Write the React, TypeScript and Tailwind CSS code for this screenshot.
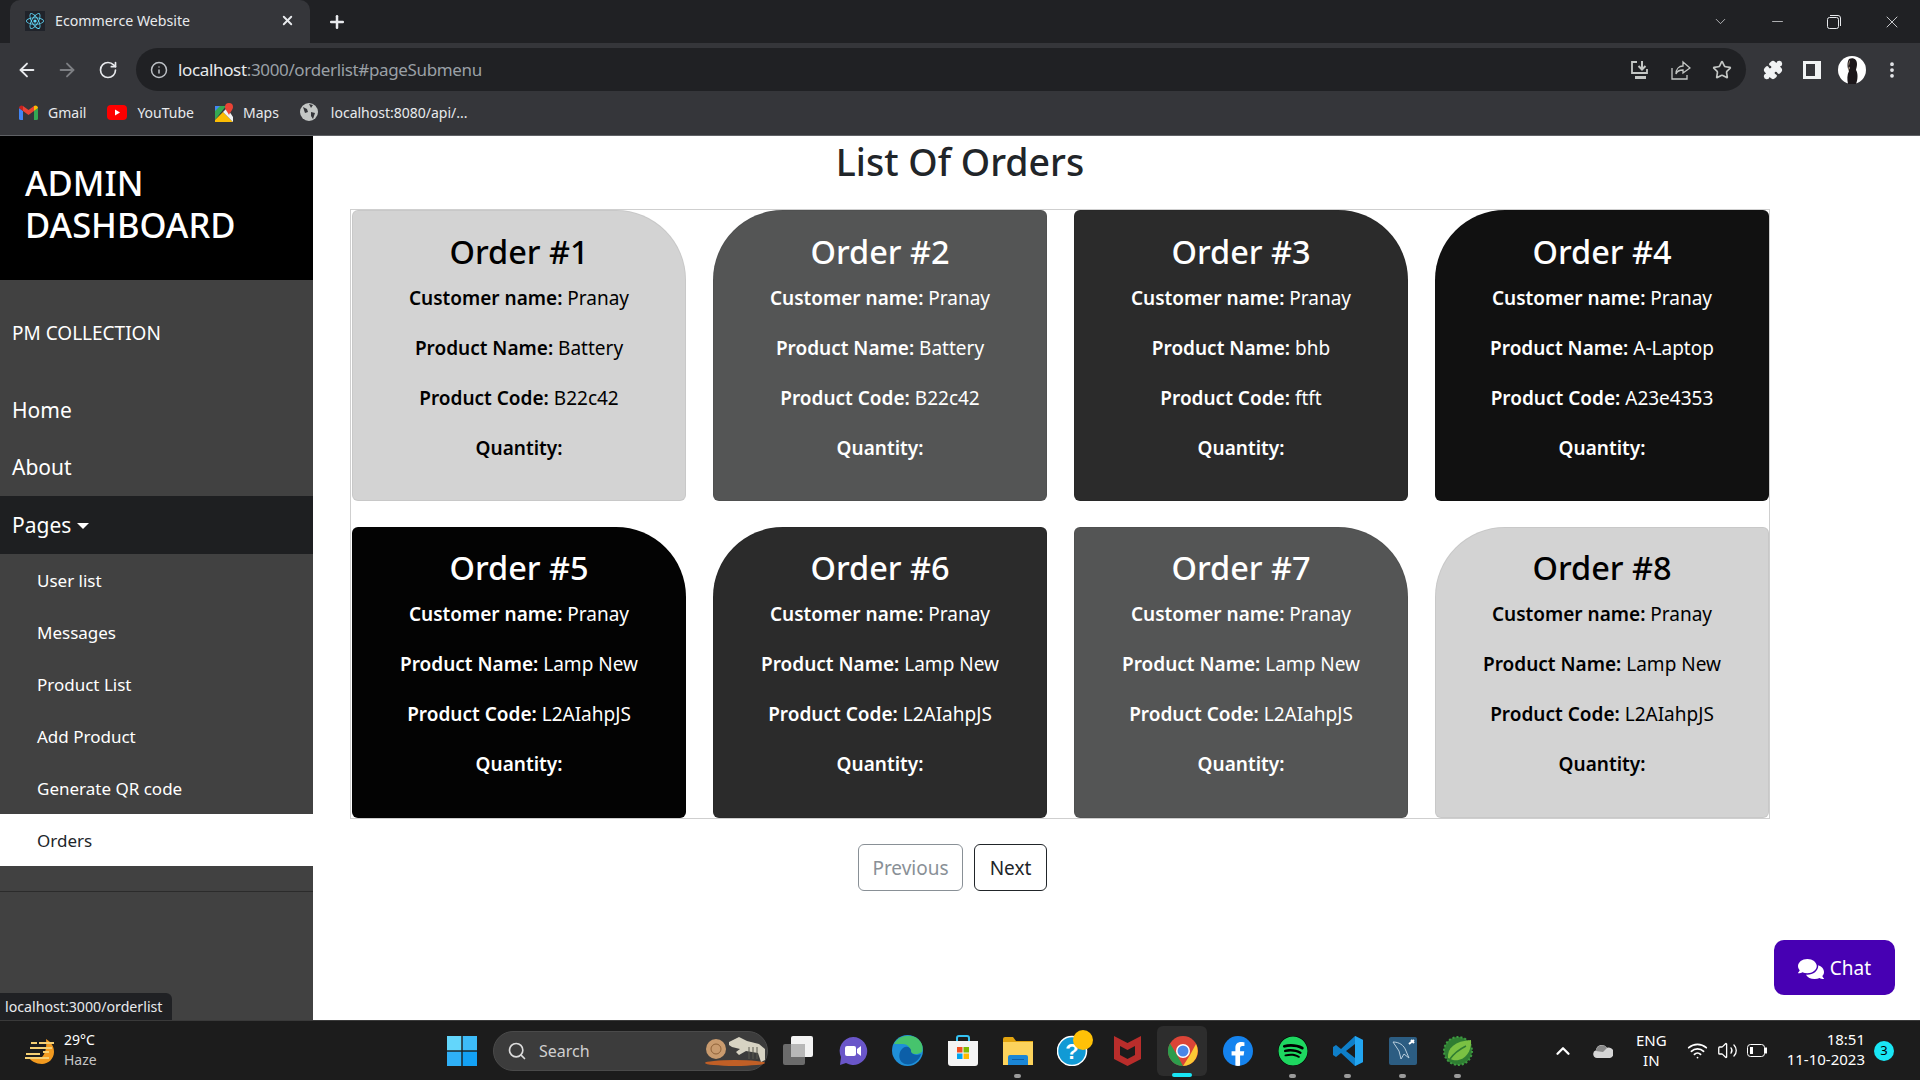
import { ArrowLeft, ArrowRight, RotateCw, Info, Plus, X, Star, Puzzle, ChevronDown, ChevronUp, Minus, Search, Wifi, Volume2, MoreVertical } from "lucide-react";
import { FaReact, FaComments, FaFacebookF, FaSpotify } from "react-icons/fa";

const orders = [
  { id: 1, name: "Battery", code: "B22c42", card: "bg-[#d3d3d3] text-black rounded-tr-[70px]" },
  { id: 2, name: "Battery", code: "B22c42", card: "bg-[#545555] text-white rounded-tl-[70px]" },
  { id: 3, name: "bhb", code: "ftft", card: "bg-[#2b2b2b] text-white rounded-tr-[70px]" },
  { id: 4, name: "A-Laptop", code: "A23e4353", card: "bg-[#111111] text-white rounded-tl-[70px]" },
  { id: 5, name: "Lamp New", code: "L2AIahpJS", card: "bg-[#030303] text-white rounded-tr-[70px]" },
  { id: 6, name: "Lamp New", code: "L2AIahpJS", card: "bg-[#2b2b2b] text-white rounded-tl-[70px]" },
  { id: 7, name: "Lamp New", code: "L2AIahpJS", card: "bg-[#545555] text-white rounded-tr-[70px]" },
  { id: 8, name: "Lamp New", code: "L2AIahpJS", card: "bg-[#d3d3d3] text-black rounded-tl-[70px]" },
];

const subLinks = ["User list", "Messages", "Product List", "Add Product", "Generate QR code"];

function OrderCard({ order }: { order: (typeof orders)[number] }) {
  return (
    <div className={`h-[291px] rounded-md border border-black/5 text-center ${order.card}`}>
      <h3 className={`${order.id > 4 ? "mt-[17px]" : "mt-[18px]"} text-[32.5px] font-medium leading-[46px]`}>Order #{order.id}</h3>
      <div className="mt-[8px] flex flex-col gap-[20px] text-[19px] leading-[30px]">
        <p><b className="font-semibold">Customer name:</b> Pranay</p>
        <p><b className="font-semibold">Product Name:</b> {order.name}</p>
        <p><b className="font-semibold">Product Code:</b> {order.code}</p>
        <p><b className="font-semibold">Quantity:</b></p>
      </div>
    </div>
  );
}

function Bookmark({ icon, label }: { icon: React.ReactNode; label: string }) {
  return (
    <div className="flex items-center gap-[10px] text-[14px] text-[#e8eaed]">
      {icon}
      <span>{label}</span>
    </div>
  );
}

function BrowserBar() {
  return (
    <div className="h-[136px] shrink-0 border-b border-[#5f6165] bg-[#35363a] text-[#e8eaed]">
      <div className="flex h-[43px] items-end bg-[#202124] pl-[10px]">
        <div className="flex h-[43px] w-[300px] items-center rounded-t-[10px] bg-[#35363a] pb-[2px] pl-[15px] pr-[15px]">
          <span className="flex h-5 w-5 items-center justify-center bg-[#20232a]">
            <FaReact size={18} className="text-[#61dafb]" />
          </span>
          <span className="ml-[10px] flex-1 text-[14.200px]">Ecommerce Website</span>
          <X size={15} strokeWidth={3} />
        </div>
        <div className="flex h-[43px] items-center pl-[17px]">
          <Plus size={20} strokeWidth={3} />
        </div>
        <div className="ml-auto flex h-[43px] items-center">
          <ChevronDown size={17} strokeWidth={1} className="mr-[40px]" />
          <Minus size={17} strokeWidth={1} className="mr-[41px]" />
          <svg width="14" height="14" viewBox="0 0 14 14" fill="none" stroke="currentColor" className="mr-[41px]">
            <rect x="0.5" y="2.5" width="11" height="11" rx="2" />
            <path d="M3 .5h8a2.500 2.500 0 0 1 2.500 2.500v8" />
          </svg>
          <X size={20} strokeWidth={1} className="mr-[18px]" />
        </div>
      </div>

      <div className="flex h-[48px] items-center pt-[5px]">
        <ArrowLeft size={22} className="ml-[16px]" />
        <ArrowRight size={22} className="ml-[18px] text-[#7d7f83]" />
        <RotateCw size={20} className="ml-[20px]" />
        <div className="ml-[18px] flex h-[43px] w-[1610px] items-center rounded-full bg-[#202124] pl-[14px] pr-[14px]">
          <Info size={18} className="text-[#bdc1c6]" />
          <span className="ml-[10px] text-[17px] tracking-[-0.35px]">
            localhost<span className="text-[#9aa0a6]">:3000/orderlist#pageSubmenu</span>
          </span>
          <div className="ml-auto flex items-center gap-[21px] text-[#c4c7c5]">
            <svg width="20" height="20" viewBox="0 0 20 20" fill="none" stroke="currentColor" strokeWidth="1.800">
              <path d="M7 2H2v11h15V9" />
              <path d="M12 1v8M8.500 6l3.500 3.500L15.500 6" strokeWidth="2" />
              <path d="M5 17.500h11" strokeWidth="3" />
            </svg>
            <svg width="20" height="20" viewBox="0 0 20 20" fill="none" stroke="currentColor" strokeWidth="1.300">
              <path d="M1 8v11h15v-4" />
              <path d="M12 2l7 6-7 5v-3c-3 0-6 1-7 4 0-5 3-8 7-8z" />
            </svg>
            <Star size={20} strokeWidth={2} />
          </div>
        </div>
        <Puzzle size={20} fill="#f1f3f4" className="ml-[17px] text-[#f1f3f4]" />
        <svg width="18" height="18" viewBox="0 0 18 18" className="ml-[20px]">
          <path fillRule="evenodd" d="M0 0h18v18H0zM3 3v12h9V3z" fill="#f1f3f4" />
        </svg>
        <svg width="28" height="28" viewBox="0 0 28 28" className="ml-[17px]">
          <circle cx="14" cy="14" r="14" fill="#fff" />
          <path d="M11 3c4-2 8 0 8 5 0 3-1 5-1 6 2 3 2 9 0 14h-8c-1-5-1-9 1-13-2-3-2-9 0-12z" fill="#1c171a" />
          <path d="M12 4c-2 2-2 6 0 8l-2 3z" fill="#c9b39b" />
        </svg>
        <MoreVertical size={20} strokeWidth={2.500} className="ml-[16px]" />
      </div>

      <div className="flex h-[42px] items-center gap-[21px] pl-[19px]">
        <Bookmark
          label="Gmail"
          icon={
            <svg width="19" height="15" viewBox="0 0 19 15">
              <path d="M0 3v10.500A1.500 1.500 0 0 0 1.500 15H4V6z" fill="#4285f4" />
              <path d="M19 3v10.500a1.500 1.500 0 0 1-1.500 1.500H15V6z" fill="#34a853" />
              <path d="M4 6l5.500 4L15 6V1l-5.500 4L4 1z" fill="#ea4335" />
              <path d="M0 3c0-2 2.500-3.500 4-2v5z" fill="#c5221f" />
              <path d="M19 3c0-2-2.500-3.500-4-2v5z" fill="#fbbc04" />
            </svg>
          }
        />
        <Bookmark
          label="YouTube"
          icon={
            <svg width="20" height="15" viewBox="0 0 20 15">
              <rect width="20" height="15" rx="4" fill="#f00" />
              <path d="M8 4.500l5 3-5 3z" fill="#fff" />
            </svg>
          }
        />
        <Bookmark
          label="Maps"
          icon={
            <svg width="18" height="19" viewBox="0 0 18 19">
              <path d="M0 3h11L0 17z" fill="#34a853" />
              <path d="M0 19v-2L8 9l10 10z" fill="#fbbc04" />
              <path d="M8 9l4-4 6 9v5z" fill="#f1f3f4" />
              <path d="M14 0a4 4 0 0 1 4 4c0 3-3 5-4 8-1-3-4-5-4-8a4 4 0 0 1 4-4z" fill="#ea4335" />
              <path d="M0 3h5L0 8z" fill="#4285f4" />
            </svg>
          }
        />
        <Bookmark
          label="localhost:8080/api/..."
          icon={
            <svg width="18" height="18" viewBox="0 0 18 18" className="mr-[3px]">
              <circle cx="9" cy="9" r="9" fill="#c4c7c5" />
              <path d="M3 4l4 2 1 3-3 1zM11 9l4 1-2 6-2-3zM9 1l4 1-2 3z" fill="#35363a" />
            </svg>
          }
        />
      </div>
    </div>
  );
}

function Sidebar() {
  return (
    <aside className="flex w-[313px] shrink-0 flex-col bg-[#414141] text-white">
      <div className="h-[144px] bg-black pl-[25px] pt-[26px] text-[34.500px] font-medium leading-[42px]">
        ADMIN
        <br />
        DASHBOARD
      </div>
      <p className="flex h-[101px] items-center pl-[12px] pt-[6px] text-[19px]">PM COLLECTION</p>
      <div className="flex h-[57px] items-center pl-[12px] pt-[2px] text-[21px]">Home</div>
      <div className="flex h-[58px] items-center pl-[12px] pt-[2px] text-[21px]">About</div>
      <div className="flex h-[58px] items-center bg-[#1e1f21] pl-[12px] pt-[2px] text-[21px]">
        Pages
        <span className="ml-[6px] h-0 w-0 border-x-[6px] border-t-[6px] border-x-transparent border-t-white" />
      </div>
      {subLinks.map((link) => (
        <div key={link} className="flex h-[52px] items-center pl-[37px] pt-[1px] text-[17px]">
          {link}
        </div>
      ))}
      <div className="flex h-[52px] items-center bg-white pl-[37px] pt-[1px] text-[17px] text-[#212529]">Orders</div>
      <div className="mt-[25px] border-t border-[#2b2b2b]" />
    </aside>
  );
}

function TaskIcon({ children, dot, active }: { children: React.ReactNode; dot?: boolean; active?: boolean }) {
  return (
    <div className="relative flex h-[60px] w-[55px] items-center justify-center">
      {active && <div className="absolute left-[2px] top-[5px] h-[50px] w-[50px] rounded-md bg-[#2d2d2d]" />}
      <div className="relative flex">{children}</div>
      {dot && <div className="absolute bottom-[3px] left-[24px] h-[4px] w-[7px] rounded-full bg-[#9b9b9b]" />}
      {active && <div className="absolute bottom-[4px] left-[17px] h-[4px] w-[20px] rounded-full bg-[#19e6f5]" />}
    </div>
  );
}

function Taskbar() {
  return (
    <div className="flex h-[60px] shrink-0 items-center border-t border-[#3a3a3a] bg-[#1c1c1c] text-white">
      <div className="flex w-[447px] items-center pl-[24px]">
        <svg width="32" height="30" viewBox="0 0 32 30">
          <path d="M22 3c5 3 8 7 8 13 0 7-6 12-12 12S7 25 4 21h14c3-3 5-9 4-18z" fill="#f29a1f" />
          <g fill="#f5cf73">
            <rect x="7" y="6" width="6" height="2" />
            <rect x="15" y="6" width="15" height="2" />
            <rect x="6" y="11" width="22" height="2" />
            <rect x="2" y="17" width="14" height="2" />
            <rect x="19" y="15" width="6" height="2" />
            <rect x="1" y="21" width="24" height="2" />
          </g>
        </svg>
        <div className="-mt-[2px] ml-[8px] text-[14px] leading-[20px]">
          <div>29°C</div>
          <div className="text-[#c5c5c5]">Haze</div>
        </div>
      </div>

      <svg width="30" height="30" viewBox="0 0 30 30">
        <rect width="14.300" height="14.300" fill="#63d6fb" />
        <rect x="15.700" width="14.300" height="14.300" fill="#3dbcf9" />
        <rect y="15.700" width="14.300" height="14.300" fill="#2fb0f7" />
        <rect x="15.700" y="15.700" width="14.300" height="14.300" fill="#13a1f5" />
      </svg>

      <div className="ml-[16px] flex h-[40px] w-[275px] items-center rounded-full border border-[#4a4a4a] bg-[#3c3c3c] pl-[13px]">
        <Search size={20} strokeWidth={2} className="text-[#dcdcdc]" />
        <span className="ml-[12px] text-[16px] text-[#d0d0d0]">Search</span>
        <svg width="62" height="32" viewBox="0 0 62 32" className="ml-auto">
          <ellipse cx="30" cy="28" rx="30" ry="3" fill="#c05f26" />
          <circle cx="11" cy="14" r="10" fill="#c99b6e" />
          <circle cx="11" cy="14" r="5" fill="none" stroke="#8f6239" />
          <path d="M24 7l10-5 8 4 12 3 6 5v11l-4 2-3-9-12-2-7 4-3-3 4-3-8-2-3-2z" fill="#d7d3c3" />
          <path d="M44 12v12M48 12v12M52 12v12" stroke="#5a5a50" />
        </svg>
      </div>

      <div className="ml-[2px] flex">
        <TaskIcon>
          <svg width="30" height="30" viewBox="0 0 30 30">
            <rect x="0" y="8" width="22" height="21" rx="2" fill="#6b6b6b" />
            <rect x="8" y="0" width="22" height="21" rx="2" fill="#f3f3f3" />
            <rect x="8" y="8" width="14" height="13" fill="#b8b8b8" />
          </svg>
        </TaskIcon>
        <TaskIcon>
          <svg width="30" height="30" viewBox="0 0 30 30">
            <path d="M15 1a14 14 0 1 1-7 26l-6 2 1-8A14 14 0 0 1 15 1z" fill="#6a56c9" />
            <rect x="7" y="10" width="11" height="10" rx="2" fill="#fff" />
            <path d="M19 13l4-3v10l-4-3z" fill="#fff" />
          </svg>
        </TaskIcon>
        <TaskIcon>
          <svg width="31" height="31" viewBox="0 0 31 31">
            <circle cx="15.500" cy="15.500" r="15.500" fill="#1f8fd8" />
            <path d="M2 9C6 1 15-1 23 2c6 3 9 9 7 15-4 3-12 3-12-2 0-3-3-6-7-6-4 0-7 0-9 0z" fill="#46c46d" />
            <path d="M11 13c4-3 9 0 8 4 3 4 8 3 10 2-2 8-12 13-18 9-5-3-5-11 0-15z" fill="#0c5fa8" />
          </svg>
        </TaskIcon>
        <TaskIcon>
          <svg width="30" height="32" viewBox="0 0 30 32">
            <path d="M9 8V3a2 2 0 0 1 2-2h8a2 2 0 0 1 2 2v5" fill="none" stroke="#35c2f2" strokeWidth="2" />
            <path d="M0 6h30v22a3 3 0 0 1-3 3H3a3 3 0 0 1-3-3z" fill="#f4f4f4" />
            <rect x="9" y="12" width="5.500" height="5.500" fill="#f25022" />
            <rect x="15.500" y="12" width="5.500" height="5.500" fill="#7fba00" />
            <rect x="9" y="18.500" width="5.500" height="5.500" fill="#00a4ef" />
            <rect x="15.500" y="18.500" width="5.500" height="5.500" fill="#ffb900" />
          </svg>
        </TaskIcon>
        <TaskIcon dot>
          <svg width="30" height="28" viewBox="0 0 30 28">
            <path d="M0 2a2 2 0 0 1 2-2h8l3 4h17v24H0z" fill="#e2a40f" />
            <rect y="5" width="30" height="23" fill="#fcd35c" />
            <path d="M5 20a2 2 0 0 1 2-2h16a2 2 0 0 1 2 2v8H5z" fill="#1a86d6" />
            <rect x="9" y="22" width="12" height="1" fill="#0c5fa8" />
          </svg>
        </TaskIcon>
        <TaskIcon>
          <svg width="36" height="36" viewBox="0 0 36 36" className="-mt-[6px] ml-[5px]">
            <circle cx="15" cy="21" r="14.500" fill="#119ad5" stroke="#fff" strokeWidth="1.500" />
            <text x="15" y="29" textAnchor="middle" fontSize="22" fontWeight="700" fontFamily="Liberation Sans" fill="#fff">?</text>
            <circle cx="26" cy="10" r="10" fill="#ffc107" />
          </svg>
        </TaskIcon>
        <TaskIcon>
          <svg width="27" height="30" viewBox="0 0 27 30">
            <path d="M0 0l13.500 7L27 0v23l-13.500 7L0 23z" fill="#b92d2b" />
            <path d="M6 10l7.500 4L21 10v9l-7.500 4L6 19z" fill="#1c1c1c" />
          </svg>
        </TaskIcon>
        <TaskIcon active>
          <svg width="30" height="30" viewBox="0 0 30 30">
            <circle cx="15" cy="15" r="15" fill="#db4437" />
            <path d="M15 30A15 15 0 0 1 2 7.500L9 19z" fill="#2d9c4c" />
            <path d="M15 30l7-11 6-11a15 15 0 0 1-13 22z" fill="#fcc934" />
            <circle cx="15" cy="15" r="7" fill="#fff" />
            <circle cx="15" cy="15" r="5.500" fill="#4a86e8" />
          </svg>
        </TaskIcon>
        <TaskIcon>
          <span className="flex h-[30px] w-[30px] items-end justify-center overflow-hidden rounded-full bg-[#1583ee]">
            <FaFacebookF size={24} className="text-white" />
          </span>
        </TaskIcon>
        <TaskIcon dot>
          <FaSpotify size={30} className="rounded-full bg-black text-[#1ed760]" />
        </TaskIcon>
        <TaskIcon dot>
          <svg width="30" height="30" viewBox="0 0 30 30">
            <path d="M22 0l8 4v22l-8 4L8 17l-5 4-3-2v-8l3-2 5 4z" fill="#0f7fc9" />
            <path d="M22 0l8 4v22l-8 4z" fill="#22a5f1" />
            <path d="M22 8v14l-9-7z" fill="#1c1c1c" />
          </svg>
        </TaskIcon>
        <TaskIcon dot>
          <svg width="28" height="28" viewBox="0 0 28 28">
            <rect width="28" height="28" rx="2" fill="#2c5d82" />
            <path d="M4 5c6 0 11 3 13 9l3 7-5-4-3 5-2-8z" fill="none" stroke="#b8cedd" strokeWidth="1" />
            <path d="M20 7l5-4M22 3l3 3" stroke="#fff" strokeWidth="2" />
          </svg>
        </TaskIcon>
        <TaskIcon dot>
          <svg width="30" height="30" viewBox="0 0 30 30">
            <circle cx="15" cy="15" r="14" fill="#2f7d32" strokeDasharray="2 2" stroke="#3e9b41" strokeWidth="2" />
            <path d="M5 22C4 12 12 5 28 4c1 12-7 22-18 20z" fill="#7ac143" />
            <path d="M7 23c5-7 10-10 16-13" stroke="#2f7d32" strokeWidth="1.500" fill="none" />
          </svg>
        </TaskIcon>
      </div>

      <ChevronUp size={22} strokeWidth={2.500} className="ml-[67px]" />
      <svg width="20" height="14" viewBox="0 0 20 14" className="ml-[19px]">
        <path d="M4 14a4 4 0 0 1-1-7.800 6 6 0 0 1 11-2.500 4.500 4.500 0 0 1 3 10.300z" fill="#d6d6d6" />
        <path d="M3 7a6 6 0 0 1 11-3l-4 4z" fill="#8a8a8a" />
      </svg>
      <div className="-mt-[2px] ml-[23px] text-center text-[15px] leading-[20px]">
        ENG
        <br />
        IN
      </div>
      <Wifi size={21} className="ml-[20px]" />
      <Volume2 size={21} strokeWidth={1.500} className="ml-[9px]" />
      <svg width="20" height="13" viewBox="0 0 20 13" fill="none" stroke="#fff" className="ml-[9px]">
        <rect x="0.500" y="0.500" width="17" height="12" rx="3" />
        <rect x="18" y="4" width="2" height="5" fill="#fff" />
        <rect x="3" y="3" width="3" height="7" fill="#fff" stroke="none" />
      </svg>
      <div className="-mt-[3px] ml-[20px] text-right text-[15px] leading-[20px]">
        <div>18:51</div>
        <div>11-10-2023</div>
      </div>
      <span className="ml-[9px] flex h-[20px] w-[20px] items-center justify-center rounded-full bg-[#19e6f5] text-[13px] text-black">
        3
      </span>
    </div>
  );
}

export default function App() {
  return (
    <div className="relative flex h-[1080px] w-[1920px] flex-col overflow-hidden bg-white font-['Noto_Sans',sans-serif] text-[#212529]">
      <BrowserBar />
      <div className="flex min-h-0 flex-1">
        <Sidebar />
        <main className="flex-1 pl-[37px]">
          <h1 className="w-[1220px] pt-[2px] text-center text-[37.500px] font-medium leading-[48px] text-[#212529]">
            List Of Orders
          </h1>
          <div className="mt-[23px] grid w-[1420px] grid-cols-4 gap-x-[27px] gap-y-[26px] border border-[#cfcfcf] pl-[1px]">
            {orders.map((order) => (
              <OrderCard key={order.id} order={order} />
            ))}
          </div>
          <div className="mt-[25px] flex w-[697px] justify-end gap-[11px] text-[19px]">
            <button className="h-[47px] w-[105px] rounded-md border border-[#6c757d] pt-[2px] text-[#6c757d] opacity-80">Previous</button>
            <button className="h-[47px] w-[73px] rounded-md border border-[#212529] pt-[2px]">Next</button>
          </div>
        </main>
      </div>
      <Taskbar />

      <div className="absolute bottom-[60px] left-0 flex h-[27px] w-[172px] items-center rounded-tr-md bg-[#202124] pl-[5px] text-[14.200px] text-[#e8eaed]">
        localhost:3000/orderlist
      </div>
      <button className="absolute bottom-[85px] right-[25px] flex h-[55px] w-[121px] items-center justify-center gap-[6px] rounded-[10px] bg-[#4700b3] pt-[2px] text-[19px] text-white">
        <FaComments size={26} />
        Chat
      </button>
    </div>
  );
}
